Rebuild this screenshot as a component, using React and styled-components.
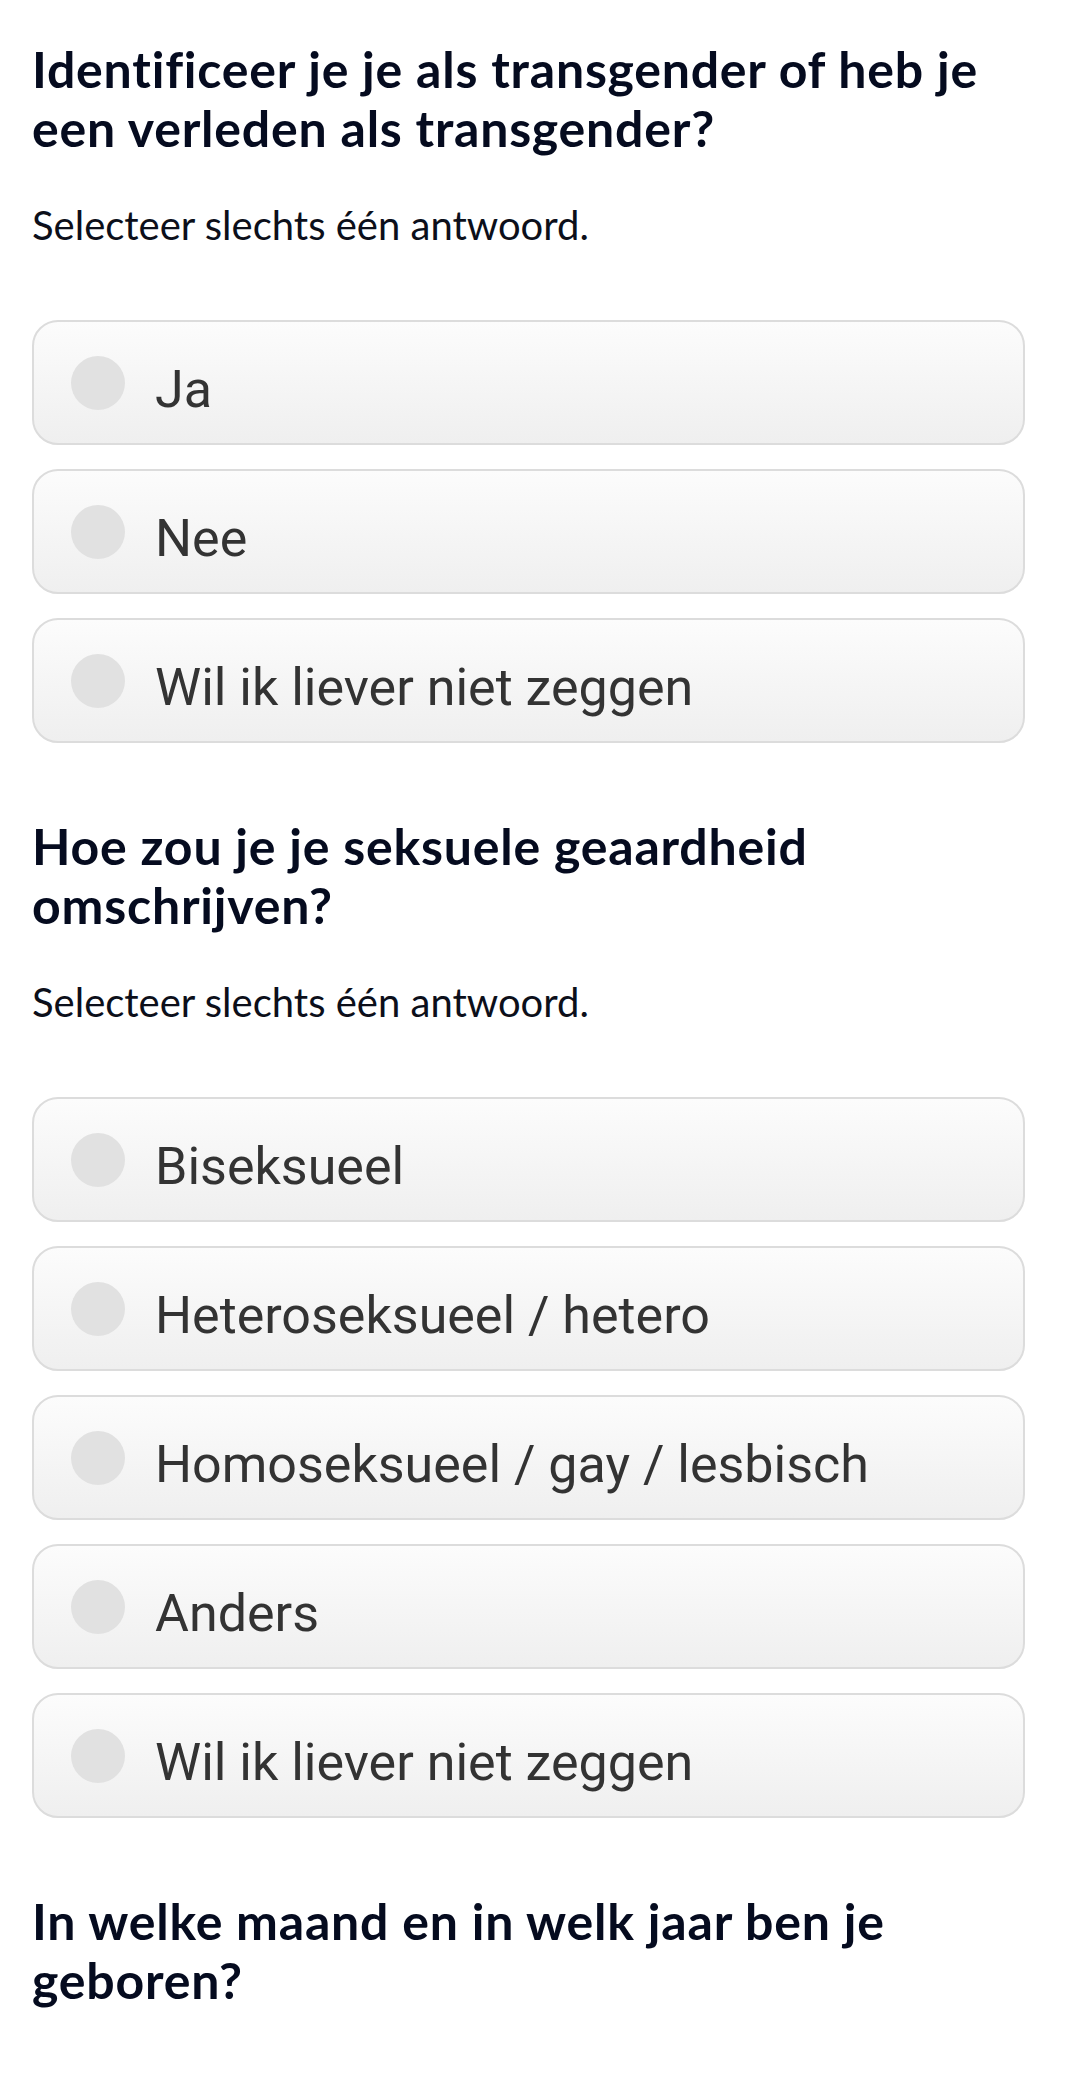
import React from 'react';
import styled, { createGlobalStyle } from 'styled-components';

const GlobalStyle = createGlobalStyle`
  html, body {
    margin: 0;
    padding: 0;
    background: #ffffff;
  }
  body {
    font-family: Lato, "Noto Sans", sans-serif;
  }
`

const Page = styled.div`
  display: flex;
  flex-direction: column;
  padding: 40px 55px 0 32px;
  min-height: 2088px;
  box-sizing: border-box;
`

const Section = styled.section`
  display: flex;
  flex-direction: column;
  & + & {
    margin-top: 74px;
  }
`

const Title = styled.h2`
  margin: 0;
  font-family: Lato, sans-serif;
  font-weight: 700;
  font-size: 50px;
  line-height: 59px;
  letter-spacing: 0.8px;
  color: #050b1f;
`

const Hint = styled.p`
  margin: 43px 0 0;
  font-family: Lato, sans-serif;
  font-weight: 400;
  font-size: 40px;
  line-height: 48px;
  color: #0c0f1a;
`

const Options = styled.div`
  display: flex;
  flex-direction: column;
  gap: 24px;
  margin-top: 71px;
`

const Option = styled.label`
  display: flex;
  align-items: center;
  gap: 30px;
  height: 125px;
  box-sizing: border-box;
  padding-left: 37px;
  border: 2px solid #dcdcdc;
  border-radius: 26px;
  background: linear-gradient(180deg, #fcfcfc 0%, #efefef 100%);
  cursor: pointer;
`

const Radio = styled.span`
  flex: 0 0 54px;
  width: 54px;
  height: 54px;
  border-radius: 50%;
  background: #e1e1e1;
`

const OptionText = styled.span`
  padding-top: 14px;
  font-family: Roboto, sans-serif;
  font-size: 52px;
  color: #333333;
`

const questions = [
  {
    title: 'Identificeer je je als transgender of heb je een verleden als transgender?',
    hint: 'Selecteer slechts één antwoord.',
    options: ['Ja', 'Nee', 'Wil ik liever niet zeggen'],
  },
  {
    title: 'Hoe zou je je seksuele geaardheid omschrijven?',
    hint: 'Selecteer slechts één antwoord.',
    options: [
      'Biseksueel',
      'Heteroseksueel / hetero',
      'Homoseksueel / gay / lesbisch',
      'Anders',
      'Wil ik liever niet zeggen',
    ],
  },
  {
    title: 'In welke maand en in welk jaar ben je geboren?',
  },
]

const App = () => {
  return (
    <>
      <GlobalStyle />
      <Page>
        {questions.map((q) => (
          <Section key={q.title}>
            <Title>{q.title}</Title>
            {q.hint && <Hint>{q.hint}</Hint>}
            {q.options && (
              <Options>
                {q.options.map((o) => (
                  <Option key={o}>
                    <Radio />
                    <OptionText>{o}</OptionText>
                  </Option>
                ))}
              </Options>
            )}
          </Section>
        ))}
      </Page>
    </>
  )
}

export default App
